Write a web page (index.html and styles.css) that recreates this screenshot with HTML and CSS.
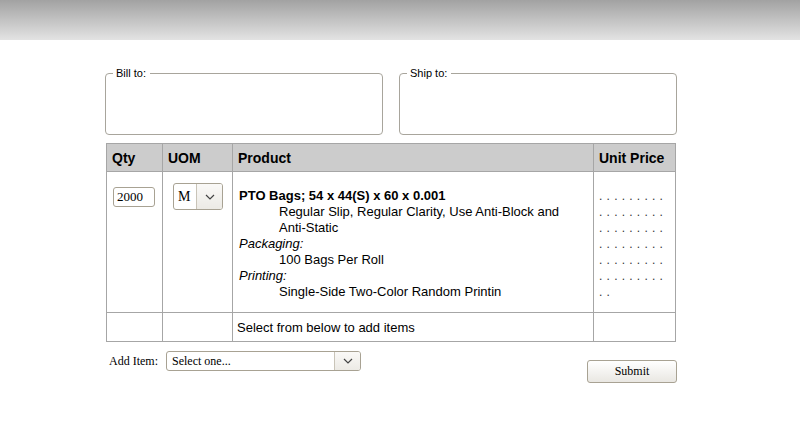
FILE: index.html
```html
<!DOCTYPE html>
<html>
<head>
<meta charset="utf-8">
<link rel="stylesheet" href="styles.css">
</head>
<body>
<div class="topbar"></div>
<div class="page">
  <div class="addresses">
    <fieldset class="addr"><legend>Bill to:</legend></fieldset>
    <fieldset class="addr"><legend>Ship to:</legend></fieldset>
  </div>
  <table class="items">
    <thead>
      <tr>
        <th class="c-qty">Qty</th>
        <th class="c-uom">UOM</th>
        <th class="c-prod">Product</th>
        <th class="c-price">Unit Price</th>
      </tr>
    </thead>
    <tbody>
      <tr class="line">
        <td class="c-qty"><div class="input qty">2000</div></td>
        <td class="c-uom"><div class="select uom"><span class="val">M</span><span class="btn"><svg width="10" height="6" viewBox="0 0 10 6"><path d="M1 1 L5 5 L9 1" fill="none" stroke="#444" stroke-width="1.2"/></svg></span></div></td>
        <td class="c-prod">
          <div class="pname">PTO Bags; 54 x 44(S) x 60 x 0.001</div>
          <div class="ind">Regular Slip, Regular Clarity, Use Anti-Block and Anti-Static</div>
          <div class="lbl">Packaging:</div>
          <div class="ind">100 Bags Per Roll</div>
          <div class="lbl">Printing:</div>
          <div class="ind">Single-Side Two-Color Random Printin</div>
        </td>
        <td class="c-price"><div class="dots">. . . . . . . . .<br>. . . . . . . . .<br>. . . . . . . . .<br>. . . . . . . . .<br>. . . . . . . . .<br>. . . . . . . . .<br>. .</div></td>
      </tr>
      <tr class="hint">
        <td></td>
        <td></td>
        <td>Select from below to add items</td>
        <td></td>
      </tr>
    </tbody>
  </table>
  <div class="footer">
    <div class="additem">
      <span class="addlbl">Add Item:</span>
      <div class="select wide"><span class="val">Select one...</span><span class="btn"><svg width="10" height="6" viewBox="0 0 10 6"><path d="M1 1 L5 5 L9 1" fill="none" stroke="#444" stroke-width="1.2"/></svg></span></div>
    </div>
    <div class="submit">Submit</div>
  </div>
</div>
</body>
</html>
```
FILE: styles.css
```css
html, body { margin: 0; padding: 0; background: #fff; }
body { font-family: "Liberation Sans", Arial, sans-serif; color: #000; }
.topbar { height: 40px; background: linear-gradient(#a2a2a2, #e3e3e3); }
.page { margin-left: 105px; width: 572px; padding-top: 27px; }
.addresses { display: flex; gap: 16px; }
.addr {
  box-sizing: border-box; width: 278px; height: 68px; margin: 0; padding: 0 8px;
  border: 1px solid #a8a59c; border-radius: 4px; min-width: 0;
}
.addr legend { font-size: 11px; padding: 0 4px 0 3px; margin-left: -1px; color: #000; }
.items {
  border-collapse: collapse; margin: 8px 0 0 1px; width: 570px;
  font-size: 13px;
}
.items th, .items td { border: 1px solid #a6a6a6; }
.items th {
  background: #cccccc; font-size: 14px; font-weight: bold; text-align: left;
  height: 28px; padding: 0 5px; box-sizing: border-box;
}
.c-qty { width: 56px; }
.c-uom { width: 70px; }
.c-price { width: 82px; }
.items td { vertical-align: top; padding: 0; }
.line td { height: 141px; box-sizing: border-box; }
.line .c-qty { padding: 15px 0 0 6px; }
.line .c-uom { padding: 11px 0 0 10px; }
.line .c-prod { padding: 16px 6px 0 6px; line-height: 16px; }
.line .c-price { padding: 16px 0 0 5px; }
.pname { font-weight: bold; }
.ind { padding-left: 40px; }
.lbl { font-style: italic; }
.dots { font-size: 12px; line-height: 16px; color: #333; letter-spacing: 0.45px; }
.hint td { height: 28px; vertical-align: middle; padding: 0 4px; }
.input, .select {
  box-sizing: border-box; border: 1px solid #a8a293; border-radius: 3px;
  font-family: "Liberation Serif", "Times New Roman", serif; font-size: 13px; background: #fff;
}
.qty { width: 42px; height: 20px; line-height: 18px; padding-left: 3px; }
.select { display: flex; overflow: hidden; }
.select .val { flex: 1; padding-left: 5px; }
.select .btn {
  border-left: 1px solid #c9c4b8; background: linear-gradient(#faf9f7, #eceae5);
  display: flex; align-items: center; justify-content: center;
}
.uom { width: 50px; height: 27px; line-height: 25px; }
.uom .val { padding-left: 4px; font-size: 14px; }
.uom .btn { width: 25px; }
.wide { width: 195px; height: 20px; line-height: 18px; font-size: 12px; }
.wide .btn { width: 25px; }
.footer { display: flex; justify-content: space-between; align-items: flex-start; margin-top: 9px; padding-left: 4px; }
.additem { display: flex; align-items: center; gap: 8px; }
.addlbl { font-family: "Liberation Serif", "Times New Roman", serif; font-size: 12px; }
.submit {
  box-sizing: border-box; width: 90px; height: 23px; margin-top: 9px; margin-right: 0;
  border: 1px solid #a8a293; border-radius: 3px; background: linear-gradient(#ffffff, #e9e7e2);
  font-family: "Liberation Serif", "Times New Roman", serif; font-size: 12px;
  display: flex; align-items: center; justify-content: center;
}
```
